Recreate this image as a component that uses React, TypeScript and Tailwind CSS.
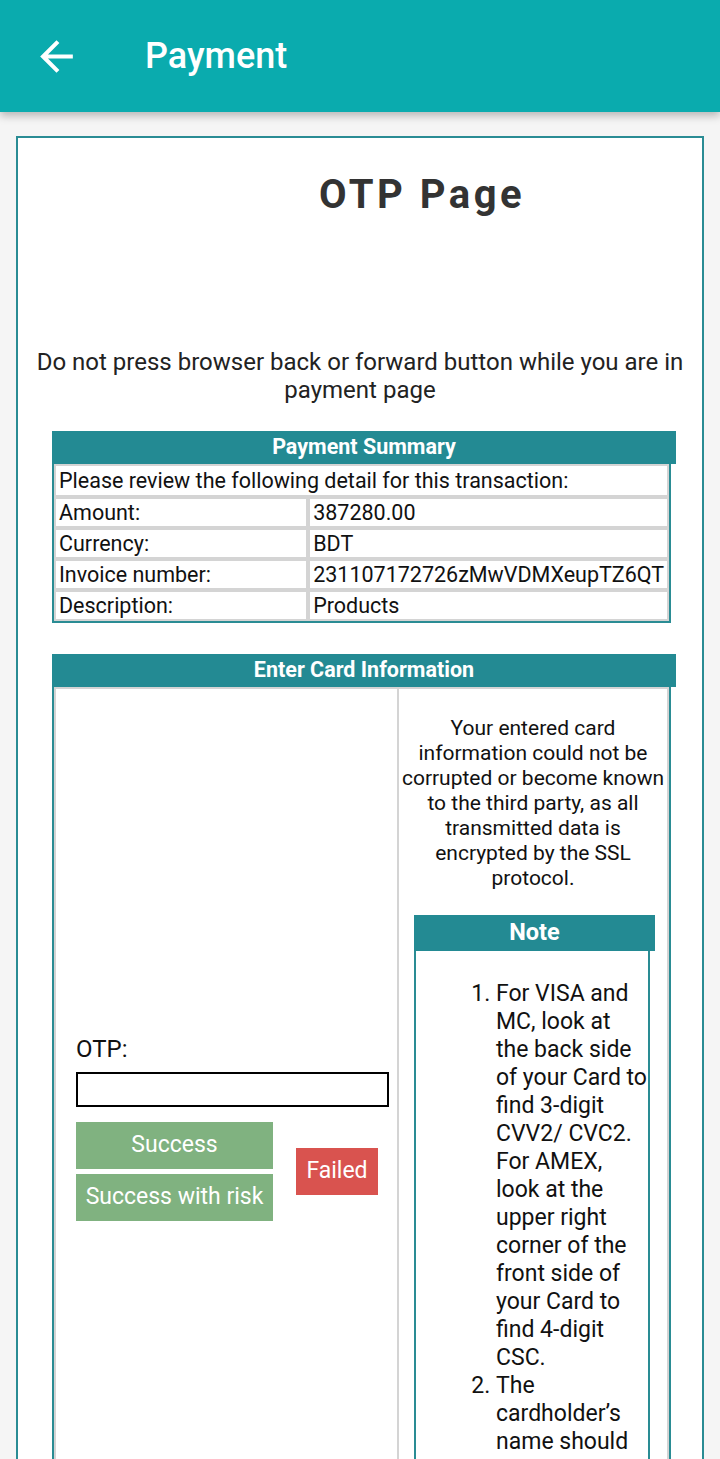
const summaryRows = [
  { label: "Amount:", value: "387280.00" },
  { label: "Currency:", value: "BDT" },
  { label: "Invoice number:", value: "231107172726zMwVDMXeupTZ6QT" },
  { label: "Description:", value: "Products" },
];

const BackArrow = () => (
  <svg viewBox="0 0 24 24" className="w-[49px] h-[49px] fill-white">
    <path d="M20 11H7.83l5.59-5.59L12 4l-8 8 8 8 1.41-1.41L7.83 13H20v-2z" />
  </svg>
);

export default function App() {
  return (
    <div className="w-[720px] h-[1459px] overflow-hidden bg-[#f5f5f5] font-['Roboto',sans-serif] text-[#222]">
      {/* app bar */}
      <div className="relative z-10 h-[112px] bg-[#0aabae] flex items-center pl-[32px] shadow-[0_4px_8px_rgba(0,0,0,0.25)]">
        <BackArrow />
        <span className="ml-[64px] text-[36px] font-medium text-white">Payment</span>
      </div>

      <div className="px-[16px] pt-[24px]">
        <div className="border-2 border-[#2a8c94] bg-white h-[1400px]">
          <h1 className="mt-[34px] pl-[124px] text-center text-[40px] leading-[46px] font-bold tracking-[3.5px] text-[#333]">
            OTP Page
          </h1>

          <p className="mt-[130px] text-center text-[24px] leading-[28px] text-[#222]">
            Do not press browser back or forward button while you are in payment page
          </p>

          {/* payment summary */}
          <div className="ml-[34px] mt-[27px] w-[624px]">
            <div className="h-[33px] bg-[#238a93] flex items-center justify-center text-white font-bold text-[21.5px]">
              Payment Summary
            </div>
            <table className="w-[619px] border-2 border-t-0 border-[#2a8c94] border-separate border-spacing-0 text-[21.5px] text-[#111]">
              <tbody>
                <tr>
                  <td colSpan={2} className="h-[33px] px-[3px] border-2 border-[#d4d4d4] leading-[26px]">
                    Please review the following detail for this transaction:
                  </td>
                </tr>
                {summaryRows.map((row) => (
                  <tr key={row.label}>
                    <td className="w-[255px] h-[31px] px-[3px] border-2 border-[#d4d4d4] leading-[26px]">
                      {row.label}
                    </td>
                    <td className="h-[31px] px-[3px] border-2 border-[#d4d4d4] leading-[26px]">
                      {row.value}
                    </td>
                  </tr>
                ))}
              </tbody>
            </table>
          </div>

          {/* card info */}
          <div className="ml-[34px] mt-[31px] w-[624px]">
            <div className="h-[33px] bg-[#238a93] flex items-center justify-center text-white font-bold text-[21.5px]">
              Enter Card Information
            </div>
            <div className="w-[619px] border-2 border-t-0 border-[#2a8c94] flex">
              <div className="w-[345px] shrink-0 border-2 border-[#d4d4d4] pt-[346px] pl-[20px]">
                <div className="text-[24px] leading-[28px] text-[#111]">OTP:</div>
                <div className="mt-[9px] w-[313px] h-[35px] border-2 border-black"></div>
                <div className="mt-[15px] flex items-center gap-[23px]">
                  <div className="flex flex-col gap-[5px]">
                    <button className="w-[197px] h-[47px] bg-[#80b280] text-white text-[23px]">Success</button>
                    <button className="w-[197px] h-[47px] bg-[#80b280] text-white text-[23px] whitespace-nowrap">
                      Success with risk
                    </button>
                  </div>
                  <button className="w-[82px] h-[47px] bg-[#d9534f] text-white text-[23px]">Failed</button>
                </div>
              </div>
              <div className="flex-1 border-2 border-l-0 border-[#d4d4d4] pt-[27px]">
                <p className="text-center text-[21px] leading-[25px] text-[#111]">
                  Your entered card information could not be corrupted or become known to the third party, as all
                  transmitted data is encrypted by the SSL protocol.
                </p>
                <div className="ml-[15px] mt-[24px] w-[241px]">
                  <div className="h-[36px] bg-[#238a93] flex items-center justify-center text-white font-bold text-[23.5px]">
                    Note
                  </div>
                  <div className="w-[236px] h-[700px] border-2 border-t-0 border-[#2a8c94] pt-[29px]">
                    <ol className="list-decimal pl-[80px] text-[23px] leading-[28px] text-[#111]">
                      <li>
                        For VISA and MC, look at the back side of your Card to find 3-digit CVV2/ CVC2. For AMEX, look
                        at the upper right corner of the front side of your Card to find 4-digit CSC.
                      </li>
                      <li>The cardholder’s name should be entered exactly as it appears on the card.</li>
                    </ol>
                  </div>
                </div>
              </div>
            </div>
          </div>
        </div>
      </div>
    </div>
  );
}
